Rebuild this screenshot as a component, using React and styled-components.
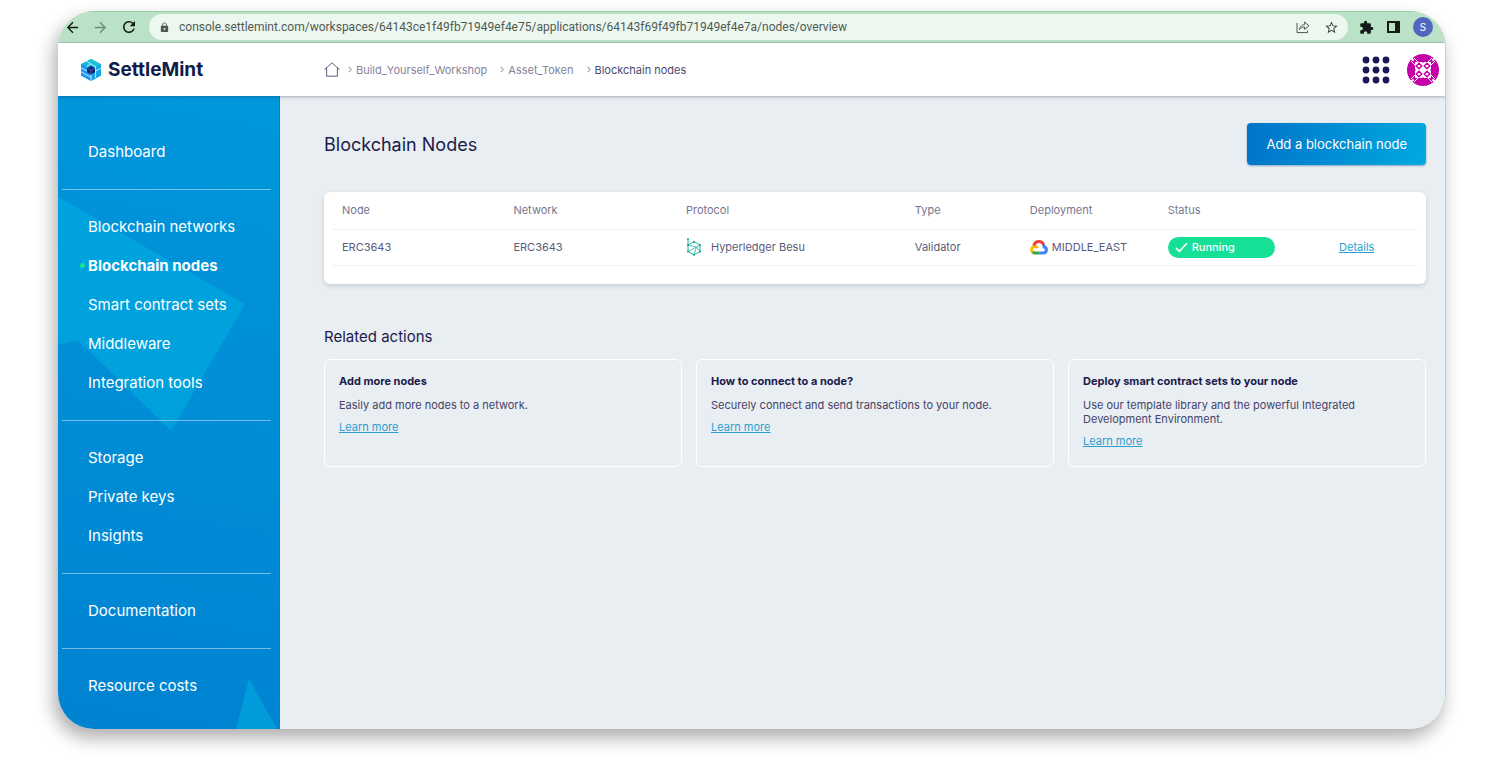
import React from 'react';
import styled, { createGlobalStyle } from 'styled-components';
import { MdArrowBack, MdArrowForward, MdRefresh, MdLock, MdExtension, MdStarBorder } from 'react-icons/md';

const GlobalStyle = createGlobalStyle`
	* {
		box-sizing: border-box;
	}
	body {
		margin: 0;
		background: #fff;
		color: #1b1a4b;
		font-family: Inter, 'Liberation Sans', sans-serif;
		font-size: 11px;
	}
	h1, h2, h3, p, ul, ol {
		margin: 0;
		padding: 0;
	}
	ul, ol {
		list-style: none;
	}
	button {
		border: 0;
		padding: 0;
		background: none;
		font-family: inherit;
		cursor: pointer;
	}
`;

const menu = [
	['Dashboard'],
	['Blockchain networks', 'Blockchain nodes', 'Smart contract sets', 'Middleware', 'Integration tools'],
	['Storage', 'Private keys', 'Insights'],
	['Documentation'],
	['Resource costs'],
];

const crumbs = ['Build_Yourself_Workshop', 'Asset_Token', 'Blockchain nodes'];

const actions = [
	{ title: 'Add more nodes', text: 'Easily add more nodes to a network.' },
	{ title: 'How to connect to a node?', text: 'Securely connect and send transactions to your node.' },
	{
		title: 'Deploy smart contract sets to your node',
		text: 'Use our template library and the powerful Integrated Development Environment.',
	},
];

const nodes = [
	{
		name: 'ERC3643',
		network: 'ERC3643',
		protocol: 'Hyperledger Besu',
		type: 'Validator',
		region: 'MIDDLE_EAST',
		status: 'Running',
	},
];

function ShareIcon() {
	return (
		<svg width="14" height="14" viewBox="0 0 14 14" fill="none" stroke="#4d5a52" strokeWidth="1" strokeLinejoin="round">
			<path d="M1 3V12.6H11.5V10.6" />
			<path d="M3.4 9.6C4 6.6 5.8 4.8 8.6 4.6V2L13 5.8L8.6 9.4V7C6.3 7 4.8 7.8 3.4 9.6Z" />
		</svg>
	);
}

function PanelIcon() {
	return (
		<svg width="13" height="12" viewBox="0 0 13 12">
			<rect x="1" y="1" width="11" height="10" fill="none" stroke="#151b17" strokeWidth="2" />
			<rect x="8" y="0" width="5" height="12" fill="#151b17" />
		</svg>
	);
}

function LogoMark() {
	return (
		<svg width="22" height="22" viewBox="0 0 22 22">
			<path d="M11 0L21 5.2V16.6L11 22L1 16.6V5.2Z" fill="#1199e4" />
			<path d="M11 0L21 5.2L16.6 7.6L6.4 2.4Z" fill="#19c4d8" />
			<path d="M1 5.2L6.4 2.4L16 7.8L11 10.4Z" fill="#12b4de" />
			<path d="M1 5.2L11 10.6V22L1 16.6Z" fill="#2196f0" />
			<path d="M11 10.6L21 5.2V16.6L11 22Z" fill="#12a4e8" />
			<path d="M11 7L15 9.2V13.2L11 15.6L7 13.2V9.2Z" fill="#17276f" />
			<path d="M7.2 9.2L11 11.2L14.8 9.2M11 11.2V15.4" stroke="#3a66d0" strokeWidth="0.8" fill="none" />
			<path
				d="M1 8.8L7 12M1 12.8L11 18.2M6.4 2.4L16 7.8M11 4.8L6.6 7.4M11 15.8V22M15.6 8V19.2M15.6 12L21 9"
				stroke="#c9f3fb"
				strokeWidth="0.9"
				fill="none"
			/>
		</svg>
	);
}

function HomeIcon() {
	return (
		<svg width="16" height="15" viewBox="0 0 16 15" fill="none" stroke="#5d5c7e" strokeWidth="1" strokeLinejoin="round" strokeLinecap="round">
			<path d="M0.7 7.4L8 0.8L15.3 7.4" />
			<path d="M2.6 6V14.2H13.4V6" />
		</svg>
	);
}

function AppsIcon() {
	return (
		<svg width="28" height="28" viewBox="0 0 28 28" fill="#1b1654">
			{[4, 14, 24].map((cy) => [4, 14, 24].map((cx) => <circle key={`${cx}-${cy}`} cx={cx} cy={cy} r="3.4" />))}
		</svg>
	);
}

function AvatarIcon() {
	return (
		<svg width="32" height="32" viewBox="0 0 32 32">
			<circle cx="16" cy="16" r="16" fill="#c400a8" />
			<path
				d="M4 7L8 11M7 4L11 8M28 7L24 11M25 4L21 8M4 25L8 21M7 28L11 24M28 25L24 21M25 28L21 24"
				stroke="#fff"
				strokeWidth="1"
			/>
			<path d="M4 4L6.6 6.6M28 4L25.4 6.6M4 28L6.6 25.4M28 28L25.4 25.4" stroke="#fff" strokeWidth="2" />
			<rect x="8" y="8" width="16" height="16" fill="#fff" />
			<g fill="none" stroke="#c400a8" strokeWidth="1.4">
				<path d="M12 9.2L14.8 12L12 14.8L9.2 12Z" />
				<path d="M20 9.2L22.8 12L20 14.8L17.2 12Z" />
				<path d="M12 17.2L14.8 20L12 22.8L9.2 20Z" />
				<path d="M20 17.2L22.8 20L20 22.8L17.2 20Z" />
			</g>
			<path d="M16 9L17 8H15ZM16 23L17 24H15ZM9 16L8 15V17ZM23 16L24 15V17Z" fill="#c400a8" />
		</svg>
	);
}

function BesuIcon() {
	return (
		<svg width="16" height="18" viewBox="0 0 16 18" fill="none" stroke="#2ab5a5" strokeWidth="1">
			<path d="M2 0.8V13.6L8 16.8L14 13.6V7L8 3.8L2 7" />
			<path d="M2 7L10.4 9L14 7M2 13.6L10.4 9L8 16.8M10.4 9L14 13.6" strokeWidth="0.8" />
			<g fill="#159c90" stroke="none">
				<circle cx="2" cy="1.2" r="1" />
				<circle cx="2" cy="7" r="1" />
				<circle cx="2" cy="13.6" r="1" />
				<circle cx="8" cy="3.8" r="1" />
				<circle cx="14" cy="7" r="1" />
				<circle cx="14" cy="13.6" r="1" />
				<circle cx="8" cy="16.8" r="1" />
			</g>
		</svg>
	);
}

function CloudIcon() {
	return (
		<svg width="18" height="15" viewBox="0 0 18 15" fill="none" strokeWidth="3">
			<path d="M5 13C3 13 1.6 11.6 1.6 9.8C1.6 8 3 6.4 5 6.4C6.2 6.4 7 7 7.6 8" stroke="#fbbc05" />
			<path d="M9.4 13H5C4.2 13 3.4 12.7 2.8 12.2" stroke="#34a853" />
			<path d="M13 4C14 5.2 14.2 6.2 14.2 7C15.6 7.2 16.4 8.4 16.4 9.8C16.4 11.8 15 13 13.2 13H9.2" stroke="#4285f4" />
			<path d="M3.8 5.6C4.6 3.2 6.6 1.6 9 1.6C11 1.6 12.6 2.6 13.6 4.6" stroke="#ea4335" />
		</svg>
	);
}

function CheckIcon() {
	return (
		<svg width="13" height="11" viewBox="0 0 13 11" fill="none" stroke="#fff" strokeWidth="1.6">
			<path d="M1 6L4.4 9.4L12 1.2" />
		</svg>
	);
}

export default function App() {
	return (
		<Page>
			<GlobalStyle />
			<Window>
				<BrowserBar>
					<BarButton aria-label="Back">
						<MdArrowBack size={17} />
					</BarButton>
					<BarButton aria-label="Forward" $muted>
						<MdArrowForward size={17} />
					</BarButton>
					<BarButton aria-label="Reload">
						<MdRefresh size={18} />
					</BarButton>
					<AddressBar>
						<MdLock size={11} color="#4d5a52" />
						<AddressInput
							aria-label="Address"
							defaultValue="console.settlemint.com/workspaces/64143ce1f49fb71949ef4e75/applications/64143f69f49fb71949ef4e7a/nodes/overview"
						/>
						<BarButton aria-label="Share">
							<ShareIcon />
						</BarButton>
						<BarButton aria-label="Bookmark">
							<MdStarBorder size={15} color="#3b463f" />
						</BarButton>
					</AddressBar>
					<BarTools>
						<BarButton aria-label="Extensions">
							<MdExtension size={15} />
						</BarButton>
						<BarButton aria-label="Side panel">
							<PanelIcon />
						</BarButton>
						<ProfileButton>S</ProfileButton>
					</BarTools>
				</BrowserBar>
				<Header>
					<Brand href="#">
						<LogoMark />
						SettleMint
					</Brand>
					<Breadcrumbs aria-label="Breadcrumb">
						<CrumbLink href="#" aria-label="Home">
							<HomeIcon />
						</CrumbLink>
						<CrumbList>
							{crumbs.map((crumb, i) => (
								<Crumb key={crumb}>
									<Chevron width="4" height="7" viewBox="0 0 4 7">
										<path d="M0.6 0.8L3.2 3.5L0.6 6.2" />
									</Chevron>
									<CrumbLink href="#" $current={i === crumbs.length - 1}>
										{crumb}
									</CrumbLink>
								</Crumb>
							))}
						</CrumbList>
					</Breadcrumbs>
					<HeaderTools>
						<button aria-label="Apps">
							<AppsIcon />
						</button>
						<button aria-label="Account">
							<AvatarIcon />
						</button>
					</HeaderTools>
				</Header>
				<Body>
					<Sidebar>
						<Shapes viewBox="0 0 222 633" preserveAspectRatio="none" aria-hidden="true">
							<path d="M0 101L187 208L113 335L20 244L0 249Z" />
							<path d="M191 583L219 633H178Z" />
						</Shapes>
						{menu.map((group) => (
							<MenuGroup key={group[0]}>
								{group.map((item) => (
									<li key={item}>
										<MenuLink href="#" $active={item === 'Blockchain nodes'}>
											{item}
										</MenuLink>
									</li>
								))}
							</MenuGroup>
						))}
					</Sidebar>
					<Main>
						<TitleRow>
							<Title>Blockchain Nodes</Title>
							<AddButton>Add a blockchain node</AddButton>
						</TitleRow>
						<TableCard>
							<Table>
								<colgroup>
									<Col $width="15.8%" />
									<Col $width="15.9%" />
									<Col $width="21.1%" />
									<Col $width="10.6%" />
									<Col $width="12.7%" />
									<Col $width="15.8%" />
									<Col $width="8.1%" />
								</colgroup>
								<thead>
									<tr>
										<th>Node</th>
										<th>Network</th>
										<th>Protocol</th>
										<th>Type</th>
										<th>Deployment</th>
										<th>Status</th>
										<td />
									</tr>
								</thead>
								<tbody>
									{nodes.map((node) => (
										<tr key={node.name}>
											<td>{node.name}</td>
											<td>{node.network}</td>
											<td>
												<IconCell $gap="9px">
													<BesuIcon />
													{node.protocol}
												</IconCell>
											</td>
											<td>{node.type}</td>
											<td>
												<IconCell $gap="4px">
													<CloudIcon />
													{node.region}
												</IconCell>
											</td>
											<td>
												<Status>
													<CheckIcon />
													{node.status}
												</Status>
											</td>
											<td>
												<TextLink href="#">Details</TextLink>
											</td>
										</tr>
									))}
								</tbody>
							</Table>
						</TableCard>
						<Subtitle>Related actions</Subtitle>
						<Actions>
							{actions.map((action) => (
								<ActionCard key={action.title}>
									<h3>{action.title}</h3>
									<p>{action.text}</p>
									<TextLink href="#">Learn more</TextLink>
								</ActionCard>
							))}
						</Actions>
					</Main>
				</Body>
			</Window>
		</Page>
	);
}

const Page = styled.div`
	display: flex;
	min-height: 100vh;
	padding: 11px 54px 48px 58px;
`;

const Window = styled.div`
	flex: 1;
	display: flex;
	flex-direction: column;
	min-width: 0;
	overflow: hidden;
	border-right: 1px solid #c3cdcd;
	border-radius: 36px;
	box-shadow: -4px 9px 18px rgba(0, 0, 0, 0.32);
`;

const BrowserBar = styled.div`
	display: flex;
	align-items: center;
	gap: 11px;
	height: 32px;
	padding: 0 12px 0 6px;
	background: #bae2c6;
	border-top: 1px solid #96cfa6;
	border-bottom: 1px solid #a5cfb1;
`;

const BarButton = styled.button`
	display: flex;
	color: ${(props) => (props.$muted ? '#6f8d79' : '#151b17')};
`;

const AddressBar = styled.div`
	flex: 1;
	display: flex;
	align-items: center;
	gap: 14px;
	height: 26px;
	padding: 0 9px 0 10px;
	border-radius: 13px;
	background: #ecf7ef;
`;

const AddressInput = styled.input`
	flex: 1;
	min-width: 0;
	margin-left: -5px;
	padding: 0;
	border: 0;
	outline: 0;
	background: none;
	color: #505a54;
	font-family: Roboto, 'Noto Sans', sans-serif;
	font-size: 12px;
	text-overflow: ellipsis;
`;

const BarTools = styled.div`
	display: flex;
	align-items: center;
	gap: 13px;
`;

const ProfileButton = styled.button`
	width: 20px;
	height: 20px;
	border-radius: 50%;
	background: #5266be;
	color: #fff;
	font-size: 10px;
`;

const Header = styled.header`
	position: relative;
	z-index: 1;
	display: flex;
	align-items: center;
	height: 53px;
	padding: 0 6px 0 22px;
	background: #fff;
	box-shadow: 0 1px 3px rgba(40, 50, 70, 0.35);
`;

const Brand = styled.a`
	display: flex;
	align-items: center;
	gap: 6px;
	width: 244px;
	color: #101d4b;
	font-size: 19px;
	font-weight: 700;
	text-decoration: none;
`;

const Breadcrumbs = styled.nav`
	flex: 1;
	display: flex;
	align-items: center;
	gap: 8px;
`;

const CrumbList = styled.ol`
	display: flex;
	gap: 13px;
`;

const Crumb = styled.li`
	display: flex;
	align-items: center;
	gap: 4px;
`;

const Chevron = styled.svg`
	fill: none;
	stroke: #77768f;
`;

const CrumbLink = styled.a`
	display: flex;
	color: ${(props) => (props.$current ? '#4a4970' : '#85849c')};
	text-decoration: none;
`;

const HeaderTools = styled.div`
	display: flex;
	align-items: center;
	gap: 17px;

	button {
		display: flex;
	}
`;

const Body = styled.div`
	flex: 1;
	display: flex;
`;

const Sidebar = styled.nav`
	position: relative;
	flex: none;
	width: 222px;
	padding: 19px 9px 0 4px;
	background: linear-gradient(190deg, #0097db, #0083d1);
	box-shadow: inset -1px 0 #0a7cc4;
`;

const Shapes = styled.svg`
	position: absolute;
	top: 0;
	left: 0;
	width: 100%;
	height: 100%;
	fill: #00b4e4;
	opacity: 0.5;
`;

const MenuGroup = styled.ul`
	position: relative;
	padding: 17px 0 18px;

	& + & {
		border-top: 1px solid rgba(255, 255, 255, 0.45);
	}
`;

const MenuLink = styled.a`
	position: relative;
	display: block;
	padding-left: 26px;
	color: #fff;
	font-size: 15px;
	font-weight: ${(props) => (props.$active ? 700 : 400)};
	line-height: 39px;
	text-decoration: none;

	&::before {
		content: '';
		display: ${(props) => (props.$active ? 'block' : 'none')};
		position: absolute;
		top: 17px;
		left: 18px;
		width: 5px;
		height: 5px;
		border-radius: 50%;
		background: #15e39a;
	}
`;

const Main = styled.main`
	flex: 1;
	min-width: 0;
	padding: 27px 19px 27px 44px;
	background: #e9eef2;
`;

const TitleRow = styled.div`
	display: flex;
	align-items: center;
	justify-content: space-between;
`;

const Title = styled.h1`
	font-size: 18px;
	font-weight: 400;
`;

const AddButton = styled.button`
	height: 42px;
	padding: 0 19px;
	border-radius: 4px;
	background: linear-gradient(100deg, #0074c8, #00a9e0);
	box-shadow: 0 1px 2px rgba(0, 60, 110, 0.4);
	color: #fff;
	font-size: 13px;
`;

const TableCard = styled.section`
	margin-top: 27px;
	padding: 0 8px 18px 9px;
	border-radius: 6px;
	background: #fff;
	box-shadow: 0 2px 5px rgba(40, 60, 80, 0.18);
`;

const Col = styled.col`
	width: ${(props) => props.$width};
`;

const Table = styled.table`
	width: 100%;
	table-layout: fixed;
	border-collapse: collapse;
	color: #5c5b7b;

	th,
	td {
		height: 36px;
		padding: 0 0 0 9px;
		border-bottom: 1px solid #eff0f2;
		font-weight: 400;
		text-align: left;
		white-space: nowrap;
	}
	th {
		height: 37px;
		color: #77768f;
	}
`;

const IconCell = styled.span`
	display: flex;
	align-items: center;
	gap: ${(props) => props.$gap};
`;

const Status = styled.span`
	display: flex;
	align-items: center;
	gap: 4px;
	width: 107px;
	height: 21px;
	padding-left: 7px;
	border-radius: 11px;
	background: #15e096;
	color: #fff;
	font-weight: 500;
`;

const TextLink = styled.a`
	color: #2b9fd0;
	text-decoration: underline;
`;

const Subtitle = styled.h2`
	margin: 43px 0 12px;
	font-size: 15px;
	font-weight: 400;
	line-height: 20px;
`;

const Actions = styled.section`
	display: grid;
	grid-template-columns: repeat(3, 1fr);
	gap: 14px;
`;

const ActionCard = styled.article`
	min-height: 108px;
	padding: 14px;
	border: 1px solid #fff;
	border-radius: 6px;
	line-height: 14px;

	h3 {
		font-size: 11px;
		font-weight: 700;
	}
	p {
		margin: 10px 0 8px;
		color: #45446a;
	}
`;
